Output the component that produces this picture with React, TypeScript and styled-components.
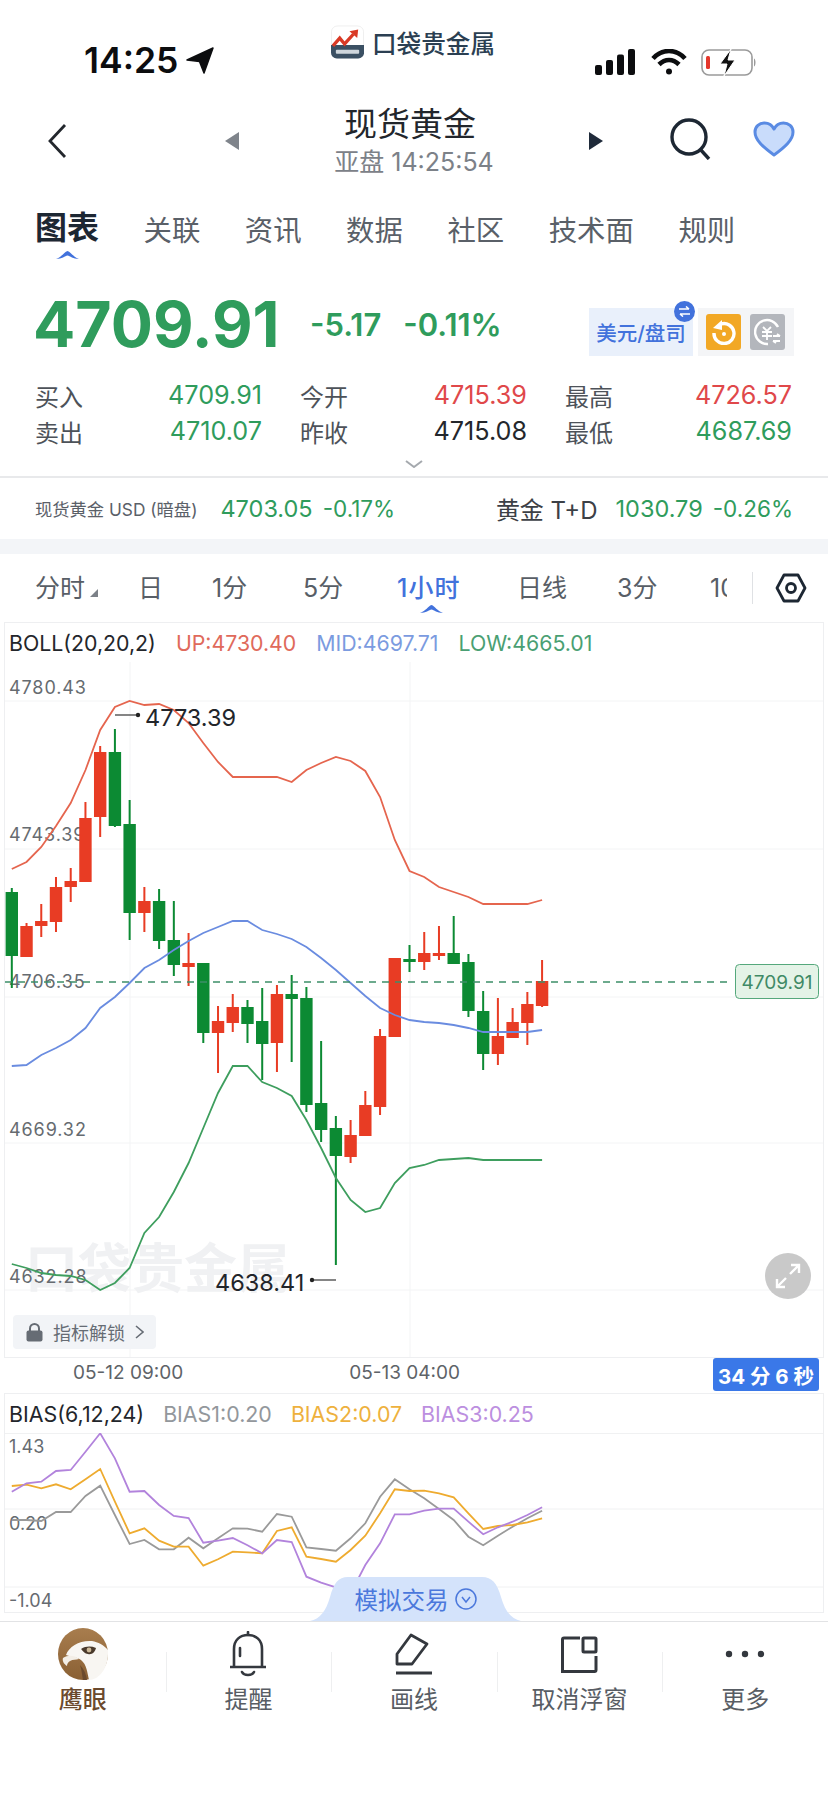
import React from 'react';
import styled, { createGlobalStyle } from 'styled-components';

const GlobalStyle = createGlobalStyle`
    html, body {
        margin: 0;
        padding: 0;
        background: #fff;
    }
    * {
        box-sizing: border-box;
    }
`;

const UI_FONT = `Inter, "Noto Sans CJK SC", sans-serif`;
const GREEN = '#2f9c5c';
const RED = '#e0484a';
const BLUE = '#4272dc';

const Page = styled.div`
    width: 828px;
    height: 1796px;
    background: #fff;
    overflow: hidden;
    font-family: ${UI_FONT};
    color: #2a2e35;
`;

/* status bar */
const StatusBar = styled.div`
    display: grid;
    grid-template-columns: 331px 164px 1fr;
    height: 100px;
`;

const Clock = styled.div`
    display: flex;
    align-items: center;
    gap: 8px;
    padding: 43px 0 0 84px;
    height: 78px;
    font-size: 35.5px;
    font-weight: 600;
    color: #0c0d0f;
`;

const Logo = styled.div`
    display: flex;
    align-items: center;
    gap: 8px;
    height: 34px;
    margin-top: 25px;
`;

const LogoText = styled.span`
    font-size: 24.6px;
    font-weight: 500;
    color: #2b3f52;
    white-space: nowrap;
`;

const StatusIcons = styled.div`
    display: flex;
    align-items: center;
    justify-content: flex-end;
    gap: 14px;
    padding: 48px 71px 0 0;
    height: 76px;
`;

/* nav */
const NavBar = styled.div`
    display: grid;
    grid-template-columns: 225px 378px 225px;
    height: 86px;
    padding-bottom: 8px;
    align-items: center;
`;

const NavLeft = styled.div`
    display: flex;
    padding: 0 0 0 47px;
    margin-top: 3px;
`;

const NavCenter = styled.div`
    display: flex;
    align-items: center;
    justify-content: space-between;
`;

const Arrow = styled.span<{ $dir: 'left' | 'right'; $color: string }>`
    width: 0;
    height: 0;
    margin-top: 3px;
    border-top: 9px solid transparent;
    border-bottom: 9px solid transparent;
    ${p => p.$dir === 'left' ? `border-right: 14px solid ${p.$color};` : `border-left: 14px solid ${p.$color};`}
`;

const TitleBlock = styled.div`
    display: flex;
    flex-direction: column;
    align-items: center;
`;

const Title = styled.div`
    font-size: 33px;
    line-height: 46px;
    color: #22262c;
    margin-right: 8px;
`;

const SubTitle = styled.div`
    font-size: 25px;
    line-height: 30px;
    color: #7c8188;
    white-space: nowrap;
`;

const NavRight = styled.div`
    display: flex;
    align-items: center;
    gap: 42px;
    padding-left: 67px;
`;

/* tabs */
const TabBar = styled.div`
    display: flex;
    align-items: center;
    gap: 44.5px;
    height: 82px;
    padding: 8px 35px 0;
`;

const Tab = styled.div<{ $active?: boolean }>`
    position: relative;
    font-size: ${p => (p.$active ? '32px' : '28.4px')};
    font-weight: ${p => (p.$active ? 600 : 400)};
    color: ${p => (p.$active ? '#1d2733' : '#5a6068')};
    line-height: 40px;
    white-space: nowrap;
    margin-top: ${p => (p.$active ? '-6px' : '0')};
`;

const TabMark = styled.svg`
    position: absolute;
    left: 21px;
    bottom: -11px;
`;

/* quote */
const QuoteRow = styled.div`
    display: flex;
    align-items: center;
    height: 104px;
    padding: 8px 34px 0 33px;
`;

const BigPrice = styled.div`
    font-size: 62.6px;
    font-weight: 700;
    color: ${GREEN};
    width: 277px;
    white-space: nowrap;
`;

const Change = styled.div`
    font-size: 31px;
    font-weight: 600;
    color: ${GREEN};
    white-space: nowrap;
    margin-right: 22px;
`;

const UnitGroup = styled.div`
    display: flex;
    margin-left: auto;
    margin-top: 16px;
    gap: 5px;
`;

const UnitBadge = styled.div`
    position: relative;
    display: flex;
    align-items: center;
    justify-content: center;
    width: 104px;
    height: 48px;
    background: #e9f0fb;
    color: ${BLUE};
    font-size: 20.5px;
    font-weight: 500;
    white-space: nowrap;
`;

const SwapDot = styled.span`
    position: absolute;
    right: -2px;
    top: -7px;
    width: 21px;
    height: 21px;
    border-radius: 50%;
    background: ${BLUE};
    display: flex;
    align-items: center;
    justify-content: center;
`;

const ToggleBox = styled.div`
    display: flex;
    align-items: center;
    gap: 9px;
    width: 96px;
    height: 48px;
    padding: 0 8px;
    background: #f4f5f7;
`;

const ToggleIcon = styled.div<{ $bg: string }>`
    width: 35px;
    height: 36px;
    border-radius: 3px;
    background: ${p => p.$bg};
    display: flex;
    align-items: center;
    justify-content: center;
`;

const StatsGrid = styled.div`
    display: grid;
    grid-template-columns: repeat(3, 227px);
    column-gap: 38px;
    row-gap: 0;
    padding: 5px 0 0 35px;
`;

const StatCell = styled.div`
    display: flex;
    justify-content: space-between;
    align-items: center;
    height: 36px;
`;

const StatLabel = styled.span`
    font-size: 24px;
    color: #4d5259;
`;

const StatValue = styled.span<{ $color: string }>`
    font-size: 25.2px;
    color: ${p => p.$color};
`;

const ExpandHint = styled.div`
    display: flex;
    justify-content: center;
    height: 29px;
    padding-top: 11px;
    border-bottom: 2px solid #e8e9eb;
`;

const RelatedRow = styled.div`
    display: flex;
    align-items: center;
    height: 61px;
    padding: 0 35px;
    white-space: nowrap;
`;

const RelatedName = styled.span<{ $size: number; $color: string }>`
    font-size: ${p => p.$size}px;
    color: ${p => p.$color};
`;

const RelatedValue = styled.span<{ $left: number; $size: number }>`
    font-size: ${p => p.$size}px;
    color: ${GREEN};
    margin-left: ${p => p.$left}px;
`;

const RelatedSpacer = styled.span`
    flex: 1;
`;

const Band = styled.div`
    height: 15px;
    background: #f3f5f8;
`;

/* periods */
const PeriodBar = styled.div`
    position: relative;
    display: flex;
    align-items: center;
    height: 68px;
    padding-left: 35px;
    white-space: nowrap;
`;

const Period = styled.div<{ $width: number; $active?: boolean }>`
    position: relative;
    width: ${p => p.$width}px;
    margin-top: -4px;
    font-size: 25px;
    font-weight: ${p => (p.$active ? 500 : 400)};
    letter-spacing: ${p => (p.$active ? '1px' : '0')};
    color: ${p => (p.$active ? BLUE : '#585e66')};
    overflow: hidden;
    flex: none;
`;

const PeriodMark = styled.svg`
    position: absolute;
    left: 420px;
    top: 51px;
`;

const CornerMark = styled.span`
    display: inline-block;
    width: 0;
    height: 0;
    margin-left: 5px;
    border-left: 8px solid transparent;
    border-bottom: 8px solid #7c8188;
`;

const PeriodSep = styled.div`
    width: 1px;
    height: 32px;
    background: #dfe1e4;
    margin: 0 22px 0 25px;
    flex: none;
`;

/* chart */
const ChartPanel = styled.div`
    position: relative;
    margin: 0 4px;
    height: 736px;
    border: 1px solid #eeeff1;
`;

const Legend = styled.div<{ $height: number; $size: number; $gap: number }>`
    display: flex;
    align-items: center;
    gap: ${p => p.$gap}px;
    height: ${p => p.$height}px;
    padding-left: 4px;
    font-size: ${p => p.$size}px;
    white-space: nowrap;
`;

const LegendItem = styled.span<{ $color: string }>`
    color: ${p => p.$color};
`;

const ChartSvg = styled.svg`
    display: block;
`;

const UnlockButton = styled.div`
    position: absolute;
    left: 8px;
    top: 692px;
    display: flex;
    align-items: center;
    width: 143px;
    height: 34px;
    padding-left: 13px;
    gap: 10px;
    background: #f2f4f7;
    border-radius: 4px;
    font-size: 18px;
    color: #666c74;
`;

const ExpandButton = styled.div`
    position: absolute;
    left: 760px;
    top: 630px;
    width: 46px;
    height: 46px;
    border-radius: 50%;
    background: #c9c9c9;
    display: flex;
    align-items: center;
    justify-content: center;
`;

const TimeAxis = styled.div`
    display: flex;
    align-items: flex-start;
    height: 35px;
    padding: 0 9px 0 73px;
    font-size: 19px;
    color: #5e6368;
    white-space: nowrap;
`;

const TimeLabel = styled.span<{ $left?: number }>`
    margin-left: ${p => p.$left || 0}px;
    line-height: 30px;
`;

const TimerBadge = styled.div`
    margin-left: auto;
    width: 106px;
    height: 33px;
    border-radius: 3px;
    background: #3a78e8;
    color: #fff;
    font-size: 20.5px;
    font-weight: 700;
    display: flex;
    align-items: center;
    justify-content: center;
    white-space: nowrap;
`;

const BiasPanel = styled.div`
    position: relative;
    margin: 0 4px;
    height: 220px;
    border: 1px solid #eeeff1;
`;

const SimTab = styled.div`
    position: absolute;
    left: 305px;
    top: 183px;
    width: 211px;
    height: 44px;
    display: flex;
    align-items: center;
    justify-content: center;
    gap: 6px;
    color: #4b78dc;
    font-size: 23.5px;
    z-index: 1;
`;

const SimShape = styled.svg`
    position: absolute;
    inset: 0;
    z-index: -1;
`;

/* toolbar */
const Toolbar = styled.div`
    display: grid;
    grid-template-columns: repeat(5, 1fr);
    margin-top: 8px;
    border-top: 1px solid #e2e3e5;
    height: 110px;
`;

const ToolItem = styled.div<{ $sep?: boolean }>`
    position: relative;
    display: flex;
    flex-direction: column;
    align-items: center;
    padding-top: 5px;
    &::before {
        content: '';
        display: ${p => (p.$sep ? 'block' : 'none')};
        position: absolute;
        left: 0;
        top: 30px;
        width: 1px;
        height: 40px;
        background: #eeeff0;
    }
`;

const ToolIcon = styled.div`
    display: flex;
    align-items: center;
    justify-content: center;
    height: 54px;
`;

const ToolLabel = styled.div<{ $brown?: boolean }>`
    margin-top: 2px;
    font-size: 24px;
    line-height: 34px;
    color: ${p => (p.$brown ? '#6b4a2d' : '#585d64')};
    font-weight: ${p => (p.$brown ? 500 : 400)};
    white-space: nowrap;
`;

/* data, all in page pixels */
const candleX = (i: number) => 11.8 + 14.73 * i;

type Candle = [number, number, number, number, 'r' | 'g'];

const candles: Candle[] = [
    [888, 892, 956, 988, 'g'], [923, 926, 957, 957, 'r'], [904, 921, 926, 937, 'r'], [877, 887, 922, 932, 'r'],
    [868, 881, 887, 902, 'r'], [802, 818, 882, 882, 'r'], [746, 752, 817, 837, 'r'], [729, 752, 826, 827, 'g'],
    [800, 824, 913, 940, 'g'], [887, 901, 913, 932, 'r'], [889, 901, 941, 949, 'g'], [901, 940, 965, 976, 'g'],
    [933, 963, 967, 986, 'r'], [963, 963, 1033, 1043, 'g'], [1006, 1021, 1033, 1073, 'r'], [994, 1007, 1023, 1032, 'r'],
    [1000, 1007, 1024, 1043, 'g'], [988, 1021, 1044, 1080, 'g'], [985, 994, 1043, 1072, 'r'], [975, 994, 999, 1062, 'g'],
    [987, 998, 1105, 1112, 'g'], [1041, 1103, 1130, 1142, 'g'], [1116, 1128, 1156, 1265, 'g'], [1120, 1135, 1157, 1163, 'r'],
    [1091, 1105, 1136, 1136, 'r'], [1029, 1036, 1107, 1115, 'r'], [958, 958, 1037, 1037, 'r'], [945, 959, 962, 972, 'g'],
    [932, 953, 962, 970, 'r'], [926, 953, 955, 960, 'r'], [916, 953, 964, 964, 'g'], [954, 962, 1011, 1017, 'g'],
    [991, 1011, 1054, 1070, 'g'], [998, 1036, 1054, 1065, 'r'], [1008, 1022, 1038, 1038, 'r'], [992, 1004, 1023, 1045, 'r'],
    [960, 981, 1006, 1007, 'r'],
];

const upperBand = [869, 862, 847, 826, 803, 770, 730, 707, 701, 705, 704, 710, 723, 743, 762, 777, 777, 777, 777, 782, 770, 763, 757, 761, 771, 797, 840, 871, 877, 887, 892, 897, 904, 904, 904, 904, 900];
const midBand = [1066, 1065, 1055, 1048, 1040, 1028, 1008, 997, 983, 968, 960, 950, 941, 933, 927, 921, 921, 930, 934, 939, 947, 958, 970, 983, 996, 1008, 1015, 1020, 1022, 1023, 1025, 1028, 1032, 1032, 1032, 1032, 1030];
const lowBand = [1264, 1268, 1273, 1275, 1276, 1280, 1290, 1283, 1268, 1233, 1217, 1192, 1163, 1128, 1093, 1066, 1066, 1082, 1088, 1096, 1120, 1148, 1178, 1200, 1212, 1208, 1183, 1168, 1165, 1160, 1159, 1158, 1160, 1160, 1160, 1160, 1160];

const biasY = (z: number) => 1390 + z / 3;
const bias1 = [390, 390, 393, 366, 366, 318, 287, 375, 462, 450, 478, 478, 443, 475, 445, 415, 416, 425, 372, 380, 472, 477, 482, 445, 400, 320, 268, 298, 325, 357, 390, 440, 466, 437, 410, 385, 362].map(biasY);
const bias2 = [288, 284, 295, 283, 298, 268, 237, 335, 430, 415, 452, 470, 470, 527, 508, 485, 487, 490, 423, 412, 500, 507, 515, 480, 437, 370, 298, 303, 302, 310, 322, 370, 417, 408, 405, 397, 385].map(biasY);
const bias3 = [305, 280, 275, 243, 240, 185, 130, 205, 305, 303, 345, 378, 384, 458, 452, 444, 466, 490, 450, 456, 560, 578, 592, 610, 525, 460, 373, 373, 362, 356, 356, 395, 433, 412, 395, 375, 352].map(biasY);

const linePoints = (ys: number[]) => ys.map((y, i) => `${candleX(i).toFixed(1)},${y.toFixed(1)}`).join(' ');

const CandleMark = ({ candle, index }: { candle: Candle; index: number }) => {
    const [high, top, bottom, low, dir] = candle;
    const x = candleX(index);
    const fill = dir === 'r' ? '#e83c24' : '#0c8a33';
    return (
        <g fill={fill}>
            <rect x={x - 1} y={high} width={2} height={low - high} />
            <rect x={x - 6.2} y={top} width={12.4} height={Math.max(bottom - top, 3)} />
        </g>
    );
};

const KlineChart = () => (
    <ChartSvg width={818} height={695} viewBox="5 662 818 695">
        <g stroke="#f3f4f5" strokeWidth="1">
            <line x1="5" x2="823" y1="701" y2="701" />
            <line x1="5" x2="823" y1="849" y2="849" />
            <line x1="5" x2="823" y1="997" y2="997" />
            <line x1="5" x2="823" y1="1143" y2="1143" />
            <line x1="5" x2="823" y1="1290" y2="1290" />
            <line x1="130" x2="130" y1="662" y2="1357" />
            <line x1="410" x2="410" y1="662" y2="1357" />
        </g>
        <text x="25" y="1288" fontFamily={UI_FONT} fontSize="53" fontWeight="600" fill="#f0f1f3">口袋贵金属</text>
        <g fontFamily={UI_FONT} fontSize="18" fill="#666b70" letterSpacing="0.9">
            <text x="9" y="694">4780.43</text>
            <text x="9" y="841">4743.39</text>
            <text x="9" y="988">4706.35</text>
            <text x="9" y="1136">4669.32</text>
            <text x="9" y="1283">4632.28</text>
        </g>
        {candles.map((c, i) => <CandleMark key={i} candle={c} index={i} />)}
        <polyline points={linePoints(upperBand)} fill="none" stroke="#e5654e" strokeWidth="1.8" />
        <polyline points={linePoints(midBand)} fill="none" stroke="#6a8ce0" strokeWidth="1.8" />
        <polyline points={linePoints(lowBand)} fill="none" stroke="#3e9e5e" strokeWidth="1.8" />
        <line x1="5" x2="732" y1="982" y2="982" stroke="#3d8f68" strokeWidth="1.6" strokeDasharray="7 6" />
        <rect x="735.5" y="964.5" width="83" height="34" rx="4" fill="#e4f3e7" stroke="#55a87c" />
        <text x="777" y="989" textAnchor="middle" fontFamily={UI_FONT} fontSize="19" fill="#3f8a66">4709.91</text>
        <line x1="115" x2="138" y1="715" y2="715" stroke="#333" strokeWidth="1.2" />
        <circle cx="138" cy="715" r="2.2" fill="#222" />
        <text x="145" y="726" fontFamily={UI_FONT} fontSize="23.5" fill="#22252a">4773.39</text>
        <line x1="312" x2="336" y1="1280" y2="1280" stroke="#333" strokeWidth="1.2" />
        <circle cx="312" cy="1280" r="2.2" fill="#222" />
        <text x="215" y="1291" fontFamily={UI_FONT} fontSize="23.5" fill="#22252a">4638.41</text>
    </ChartSvg>
);

const BiasChart = () => (
    <ChartSvg width={818} height={179} viewBox="5 1433 818 179">
        <g stroke="#f0f1f2" strokeWidth="1">
            <line x1="5" x2="823" y1="1433.5" y2="1433.5" />
            <line x1="5" x2="823" y1="1509" y2="1509" />
            <line x1="5" x2="823" y1="1587" y2="1587" />
        </g>
        <g fontFamily={UI_FONT} fontSize="18" fill="#666b70">
            <text x="9" y="1453">1.43</text>
            <text x="9" y="1530">0.20</text>
            <text x="9" y="1607">-1.04</text>
        </g>
        <polyline points={linePoints(bias1)} fill="none" stroke="#9a9a9a" strokeWidth="1.8" />
        <polyline points={linePoints(bias2)} fill="none" stroke="#eeab2f" strokeWidth="1.8" />
        <polyline points={linePoints(bias3)} fill="none" stroke="#b283dc" strokeWidth="1.8" />
    </ChartSvg>
);

const EagleIcon = () => (
    <svg width="52" height="52" viewBox="0 0 52 52">
        <defs>
            <linearGradient id="eagleBg" x1="0" y1="0" x2="0" y2="1">
                <stop offset="0" stopColor="#a87d4e" />
                <stop offset="1" stopColor="#8a6034" />
            </linearGradient>
        </defs>
        <ellipse cx="26" cy="26" rx="25" ry="26" fill="url(#eagleBg)" />
        <path d="M9 27c3-9 14-15 26-14 6 1 12 4 16 9v4c0 14-9 26-19 26-2-8-2-15-8-20-4-3-9-3-15-5z" fill="#f8f6f2" />
        <path d="M6 30c5-3 11-3 16 1-3 1-6 0-9 2-2 1-3 3-3 5-3-2-5-5-4-8z" fill="#f3eee6" />
        <path d="M24 21c5-3 10-3 15-1-1 4-4 7-8 6-3 0-5-3-7-5z" fill="#4a3a2c" />
        <circle cx="32" cy="22" r="2.4" fill="#cdb998" />
        <path d="M30 52c-1-6-3-11-7-15 2 6 2 11 3 15z" fill="#6b4a2d" />
    </svg>
);

const App = () => {
    return (
        <Page>
            <GlobalStyle />
            <StatusBar>
                <Clock>
                    14:25
                    <svg width="28" height="27" viewBox="0 0 28 27">
                        <path d="M27 1 L18 26 L13.5 14.5 L1 13 Z" fill="#0c0d0f" stroke="#0c0d0f" strokeWidth="1.5" strokeLinejoin="round" />
                    </svg>
                </Clock>
                <Logo>
                    <svg width="34" height="34" viewBox="0 0 34 34">
                        <rect x="0.5" y="0.5" width="33" height="33" rx="6" fill="#fff" stroke="#eee" />
                        <path d="M0 20h34v8a6 6 0 0 1-6 6H6a6 6 0 0 1-6-6z" fill="#3b5063" />
                        <path d="M2 21 L9 13 L14 19 L23 9" fill="none" stroke="#d93a26" strokeWidth="3.4" />
                        <path d="M19 6 L28 4 L27 13 Z" fill="#d93a26" />
                        <rect x="5" y="25" width="24" height="4" rx="1" fill="#cfd6dc" />
                    </svg>
                    <LogoText>口袋贵金属</LogoText>
                </Logo>
                <StatusIcons>
                    <svg width="42" height="26" viewBox="0 0 42 26" fill="#0c0d0f">
                        <rect x="0" y="16" width="7" height="10" rx="2" />
                        <rect x="11" y="11" width="7" height="15" rx="2" />
                        <rect x="22" y="5.5" width="7" height="20.5" rx="2" />
                        <rect x="33" y="0" width="7" height="26" rx="2" />
                    </svg>
                    <svg width="36" height="26" viewBox="0 0 36 26" fill="none" stroke="#0c0d0f" strokeWidth="4.6">
                        <path d="M2 9.5C11-0.5 25-0.5 34 9.5" />
                        <path d="M8 15.5c6-6 14-6 20 0" />
                        <circle cx="18" cy="22.5" r="3" fill="#0c0d0f" stroke="none" />
                    </svg>
                    <svg width="56" height="27" viewBox="0 0 56 27">
                        <rect x="1" y="1" width="50" height="25" rx="7" fill="#fff" stroke="#9a9a9a" strokeWidth="1.6" />
                        <rect x="5" y="7" width="4" height="13" rx="1.5" fill="#e5372c" />
                        <path d="M30 0 L19 15 H26 L23 27 L34 11 H27 Z" fill="#111" stroke="#fff" strokeWidth="1" />
                        <path d="M53 9.5c2 1 2 7 0 8z" fill="#9a9a9a" />
                    </svg>
                </StatusIcons>
            </StatusBar>

            <NavBar>
                <NavLeft>
                    <svg width="20" height="36" viewBox="0 0 20 36" fill="none" stroke="#23272d" strokeWidth="2.8">
                        <path d="M18 2 L3 18 L18 34" />
                    </svg>
                </NavLeft>
                <NavCenter>
                    <Arrow $dir="left" $color="#7f848b" />
                    <TitleBlock>
                        <Title>现货黄金</Title>
                        <SubTitle>亚盘 14:25:54</SubTitle>
                    </TitleBlock>
                    <Arrow $dir="right" $color="#1f2a3a" />
                </NavCenter>
                <NavRight>
                    <svg width="41" height="42" viewBox="0 0 41 42" fill="none" stroke="#1d2733" strokeWidth="3.4">
                        <circle cx="19" cy="19" r="17" />
                        <path d="M30 31 L39 41" />
                    </svg>
                    <svg width="42" height="37" viewBox="0 0 42 37">
                        <path d="M21 34C10 26 2 19 2 11 2 5.500 6.500 2 11.500 2 15.500 2 19 4 21 8 23 4 26.500 2 30.500 2 35.500 2 40 5.500 40 11 40 19 32 26 21 34Z" fill="#c9dcfb" stroke="#5a8be3" strokeWidth="3" strokeLinejoin="round" />
                    </svg>
                </NavRight>
            </NavBar>

            <TabBar>
                <Tab $active>
                    图表
                    <TabMark width="23" height="8" viewBox="0 0 23 8">
                        <path d="M0 8 C6 6 8 1 11.500 0 C15 1 17 6 23 8 C17 8 14 5 11.500 4.500 C9 5 6 8 0 8Z" fill={BLUE} />
                    </TabMark>
                </Tab>
                <Tab>关联</Tab>
                <Tab>资讯</Tab>
                <Tab>数据</Tab>
                <Tab>社区</Tab>
                <Tab>技术面</Tab>
                <Tab>规则</Tab>
            </TabBar>

            <QuoteRow>
                <BigPrice>4709.91</BigPrice>
                <Change>-5.17</Change>
                <Change>-0.11%</Change>
                <UnitGroup>
                    <UnitBadge>
                        美元/盘司
                        <SwapDot>
                            <svg width="13" height="11" viewBox="0 0 13 11" fill="none" stroke="#fff" strokeWidth="1.6">
                                <path d="M1 3h10M8 0.500l3 2.500M12 8H2M5 10.500L2 8" />
                            </svg>
                        </SwapDot>
                    </UnitBadge>
                    <ToggleBox>
                        <ToggleIcon $bg="#f2a825">
                            <svg width="26" height="26" viewBox="0 0 26 26" fill="none" stroke="#fff" strokeWidth="3.4">
                                <path d="M10 5a10 10 0 1 1-7 9" />
                                <path d="M2 9 L11 1 L11 11 Z" fill="#fff" stroke="none" />
                                <circle cx="13" cy="15" r="2" fill="#fff" stroke="none" />
                            </svg>
                        </ToggleIcon>
                        <ToggleIcon $bg="#b3b6bc">
                            <svg width="28" height="28" viewBox="0 0 28 28" fill="none" stroke="#fff" strokeWidth="2.4">
                                <path d="M24 9A12 12 0 1 0 14 26" />
                                <path d="M9 9l4 4 4-4M8 14h10M8 18h10M13 13v9" strokeWidth="1.8" />
                                <path d="M19 18h7M26 18l-3-2M26 23h-7M19 23l3 2" strokeWidth="1.8" />
                            </svg>
                        </ToggleIcon>
                    </ToggleBox>
                </UnitGroup>
            </QuoteRow>

            <StatsGrid>
                <StatCell><StatLabel>买入</StatLabel><StatValue $color={GREEN}>4709.91</StatValue></StatCell>
                <StatCell><StatLabel>今开</StatLabel><StatValue $color={RED}>4715.39</StatValue></StatCell>
                <StatCell><StatLabel>最高</StatLabel><StatValue $color={RED}>4726.57</StatValue></StatCell>
                <StatCell><StatLabel>卖出</StatLabel><StatValue $color={GREEN}>4710.07</StatValue></StatCell>
                <StatCell><StatLabel>昨收</StatLabel><StatValue $color="#24272c">4715.08</StatValue></StatCell>
                <StatCell><StatLabel>最低</StatLabel><StatValue $color={GREEN}>4687.69</StatValue></StatCell>
            </StatsGrid>
            <ExpandHint>
                <svg width="18" height="8" viewBox="0 0 18 8" fill="none" stroke="#a5a9ae" strokeWidth="2">
                    <path d="M1 1 L9 7 L17 1" />
                </svg>
            </ExpandHint>

            <RelatedRow>
                <RelatedName $size={17.3} $color="#5a6068">现货黄金 USD (暗盘)</RelatedName>
                <RelatedValue $left={23} $size={23.5}>4703.05</RelatedValue>
                <RelatedValue $left={10} $size={22.5}>-0.17%</RelatedValue>
                <RelatedSpacer />
                <RelatedName $size={24} $color="#3c4046">黄金 T+D</RelatedName>
                <RelatedValue $left={18} $size={23.5}>1030.79</RelatedValue>
                <RelatedValue $left={10} $size={22.5}>-0.26%</RelatedValue>
            </RelatedRow>
            <Band />

            <PeriodBar>
                <Period $width={103}>分时<CornerMark /></Period>
                <Period $width={74}>日</Period>
                <Period $width={91}>1分</Period>
                <Period $width={94}>5分</Period>
                <Period $width={120} $active>1小时</Period>
                <Period $width={100}>日线</Period>
                <Period $width={93}>3分</Period>
                <Period $width={17}>10分</Period>
                <PeriodSep />
                <svg width="32" height="30" viewBox="0 0 32 30" fill="none" stroke="#1d2733" strokeWidth="2.8">
                    <path d="M9 2h14l7 13-7 13H9L2 15z" strokeLinejoin="round" />
                    <circle cx="16" cy="15" r="4.500" />
                </svg>
                <PeriodMark width="23" height="8" viewBox="0 0 23 8">
                    <path d="M0 8 C6 6 8 1 11.500 0 C15 1 17 6 23 8 C17 8 14 5 11.500 4.500 C9 5 6 8 0 8Z" fill={BLUE} />
                </PeriodMark>
            </PeriodBar>

            <ChartPanel>
                <Legend $height={39} $size={21.3} $gap={20}>
                    <LegendItem $color="#23262b">BOLL(20,20,2)</LegendItem>
                    <LegendItem $color="#e06a5b">UP:4730.40</LegendItem>
                    <LegendItem $color="#7b9be0">MID:4697.71</LegendItem>
                    <LegendItem $color="#4a9f73">LOW:4665.01</LegendItem>
                </Legend>
                <KlineChart />
                <UnlockButton>
                    <svg width="17" height="19" viewBox="0 0 17 19" fill="#666c74">
                        <path d="M4 8V5.500a4.500 4.500 0 0 1 9 0V8" fill="none" stroke="#666c74" strokeWidth="2" />
                        <rect x="0.500" y="7.500" width="16" height="11" rx="2" />
                    </svg>
                    指标解锁
                    <svg width="9" height="14" viewBox="0 0 9 14" fill="none" stroke="#666c74" strokeWidth="1.600">
                        <path d="M1 1 L8 7 L1 13" />
                    </svg>
                </UnlockButton>
                <ExpandButton>
                    <svg width="28" height="28" viewBox="0 0 28 28" fill="none" stroke="#fff" strokeWidth="2.400">
                        <path d="M17 3h8v8M25 3L16 12M11 25H3v-8M3 25l9-9" />
                    </svg>
                </ExpandButton>
            </ChartPanel>

            <TimeAxis>
                <TimeLabel>05-12 09:00</TimeLabel>
                <TimeLabel $left={166}>05-13 04:00</TimeLabel>
                <TimerBadge>34 分 6 秒</TimerBadge>
            </TimeAxis>

            <BiasPanel>
                <Legend $height={39} $size={21.4} $gap={19}>
                    <LegendItem $color="#23262b">BIAS(6,12,24)</LegendItem>
                    <LegendItem $color="#93979c">BIAS1:0.20</LegendItem>
                    <LegendItem $color="#eeb13d">BIAS2:0.07</LegendItem>
                    <LegendItem $color="#bc8fe0">BIAS3:0.25</LegendItem>
                </Legend>
                <BiasChart />
                <SimTab>
                    <SimShape width="211" height="44" viewBox="0 0 211 44">
                        <path d="M0 44 C10 42 16 34 20 20 C24 6 28 0 38 0 H172 C182 0 187 6 191 20 C195 34 201 42 211 44 Z" fill="#d4e3fb" />
                    </SimShape>
                    模拟交易
                    <svg width="22" height="22" viewBox="0 0 22 22" fill="none" stroke="#4b78dc" strokeWidth="1.500">
                        <circle cx="11" cy="11" r="10" />
                        <path d="M7 9 L11 14 L15 9" />
                    </svg>
                </SimTab>
            </BiasPanel>

            <Toolbar>
                <ToolItem>
                    <ToolIcon><EagleIcon /></ToolIcon>
                    <ToolLabel $brown>鹰眼</ToolLabel>
                </ToolItem>
                <ToolItem $sep>
                    <ToolIcon>
                        <svg width="38" height="46" viewBox="0 0 38 46" fill="none" stroke="#34383e" strokeWidth="2.600">
                            <path d="M1 36h36M5 36V18C5 9 11 4 19 4s14 5 14 14v18" />
                            <path d="M19 1v3M13 41c2 4 10 4 12 0M11 17v8" strokeLinecap="round" />
                        </svg>
                    </ToolIcon>
                    <ToolLabel>提醒</ToolLabel>
                </ToolItem>
                <ToolItem $sep>
                    <ToolIcon>
                        <svg width="38" height="42" viewBox="0 0 38 42" fill="none" stroke="#34383e" strokeWidth="2.800">
                            <path d="M2 31V21L16 2l16 9-15 20z" strokeLinejoin="round" />
                            <path d="M1 40h36" strokeWidth="3.200" />
                        </svg>
                    </ToolIcon>
                    <ToolLabel>画线</ToolLabel>
                </ToolItem>
                <ToolItem $sep>
                    <ToolIcon>
                        <svg width="37" height="37" viewBox="0 0 37 37" fill="none" stroke="#34383e" strokeWidth="3">
                            <path d="M19 2H3a1.500 1.500 0 0 0-1.500 1.500v32h32a1.500 1.500 0 0 0 1.500-1.500V20" />
                            <rect x="22" y="2" width="13" height="14" rx="1" />
                        </svg>
                    </ToolIcon>
                    <ToolLabel>取消浮窗</ToolLabel>
                </ToolItem>
                <ToolItem $sep>
                    <ToolIcon>
                        <svg width="40" height="8" viewBox="0 0 40 8" fill="#34383e">
                            <circle cx="4" cy="4" r="3.200" />
                            <circle cx="20" cy="4" r="3.200" />
                            <circle cx="36" cy="4" r="3.200" />
                        </svg>
                    </ToolIcon>
                    <ToolLabel>更多</ToolLabel>
                </ToolItem>
            </Toolbar>
        </Page>
    );
};

export default App;
